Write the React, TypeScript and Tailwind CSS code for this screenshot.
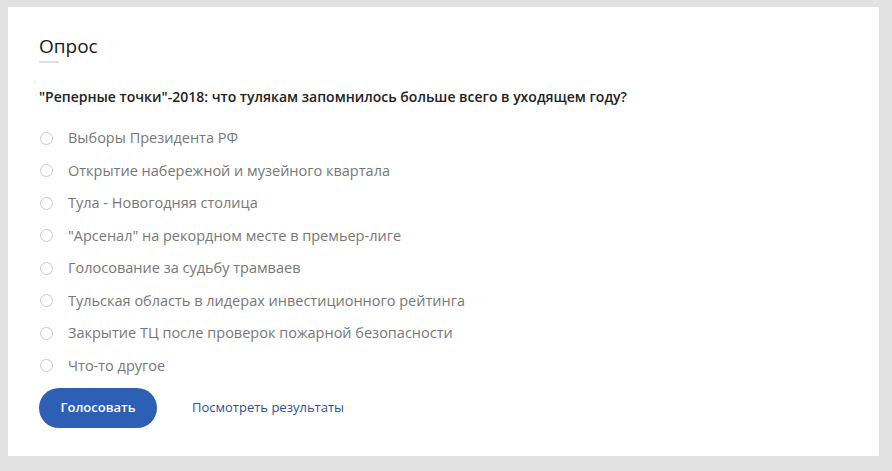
import React from 'react';

const OPTIONS = [
  'Выборы Президента РФ',
  'Открытие набережной и музейного квартала',
  'Тула - Новогодняя столица',
  '"Арсенал" на рекордном месте в премьер-лиге',
  'Голосование за судьбу трамваев',
  'Тульская область в лидерах инвестиционного рейтинга',
  'Закрытие ТЦ после проверок пожарной безопасности',
  'Что-то другое',
];

const App: React.FC = () => {
  return (
    <div className="min-h-[471px] bg-[#e2e2e2] pt-[7px] pl-[8px] pr-[13px] pb-[15px] font-['Open_Sans',sans-serif]">
      <div className="bg-white w-[871px] h-[449px] pl-[31px] pt-[24px]">
        {/* Header */}
        <h2 className="text-[19px] leading-[30px] text-[#1a1a1a] font-medium">Опрос</h2>
        <div className="w-[20px] h-[2px] bg-[#e0e0e0]" />

        <div className="mt-[24px] text-[14px] font-semibold text-[#222] leading-[20px]">
          "Реперные точки"-2018: что тулякам запомнилось больше всего в уходящем году?
        </div>

        {/* Options */}
        <div className="mt-[15px] flex flex-col">
          {OPTIONS.map((opt, i) => (
            <label key={i} className="flex items-center h-[32.5px] cursor-pointer">
              <span className="w-[13px] h-[13px] rounded-full border border-[#c9c9c9] ml-[1px] mr-[15px]" />
              <span className="text-[14.5px] text-[#777]">{opt}</span>
            </label>
          ))}
        </div>

        {/* Actions */}
        <div className="mt-[6px] flex items-center">
          <button className="w-[118px] h-[40px] rounded-full bg-[#2d5fb5] text-white text-[13px] font-semibold">
            Голосовать
          </button>
          <a className="ml-[35px] text-[13px] text-[#2f4f9f] cursor-pointer">Посмотреть результаты</a>
        </div>
      </div>
    </div>
  );
};

export default App;
